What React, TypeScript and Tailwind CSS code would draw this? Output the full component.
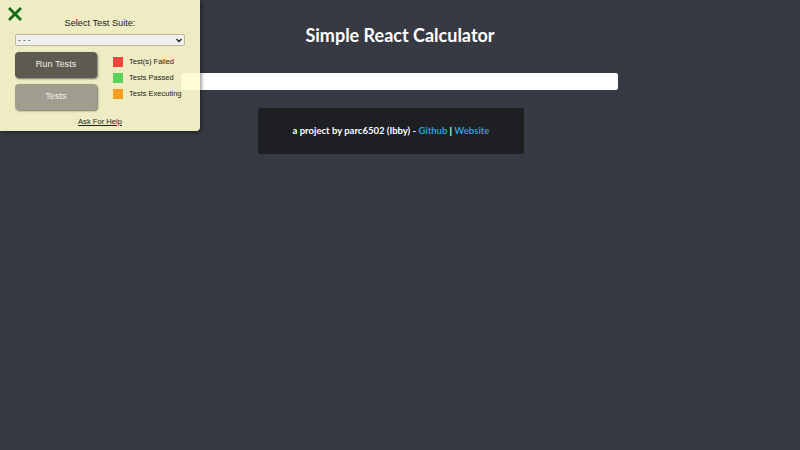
import { useState } from "react";

const lato = { fontFamily: "Lato, 'Noto Sans', sans-serif" };
const arial = { fontFamily: "'Liberation Sans', Arial, sans-serif" };

const TestPanel = () => {
  const [suite, setSuite] = useState("---");

  return (
    <div
      className="absolute left-0 top-0 w-[200px] h-[131px] rounded-br-[4px] bg-[rgba(253,252,206,0.92)] shadow-[1px_1px_4px_rgba(0,0,0,0.5)] text-[#222]"
      style={arial}
    >
      <svg className="absolute left-[8px] top-[7px]" width="14" height="14" viewBox="0 0 14 14">
        <path d="M2 2 L12 12 M12 2 L2 12" stroke="#176b17" strokeWidth="2.8" strokeLinecap="square" />
      </svg>
      <p className="pt-[16px] text-center text-[9.2px] leading-[14px]">Select Test Suite:</p>
      <div className="relative px-[15px] mt-[4px] h-[12px]">
        <select
          value={suite}
          onChange={(e) => setSuite(e.target.value)}
          className="block w-full h-[12px] text-[8px] leading-[10px] px-[2px] py-0 bg-[#f0f0ec] border border-[#b9b8a4] rounded-[2px] appearance-none"
          style={arial}
        >
          <option value="---">- - -</option>
        </select>
        <svg className="absolute right-[18px] top-[4px]" width="6" height="5" viewBox="0 0 6 5">
          <path d="M0.5 1 L3 3.5 L5.5 1" stroke="#222" strokeWidth="1.4" fill="none" />
        </svg>
      </div>
      <div className="flex px-[15px] mt-[6px]">
        <div className="flex flex-col gap-[6px]">
          <button className="w-[82px] h-[26px] rounded-[4px] bg-[#5d5b50] text-[#eeeee6] text-[9.2px] shadow-[1px_1px_2px_rgba(0,0,0,0.5)]">
            Run Tests
          </button>
          <button className="w-[82px] h-[26px] rounded-[4px] bg-[#a09e91] text-[#f0f0e8] text-[9.2px] shadow-[1px_1px_2px_rgba(0,0,0,0.5)]">
            Tests
          </button>
        </div>
        <div className="flex flex-col gap-[6px] ml-[16px] mt-[5px] text-[7.5px] leading-[10px] whitespace-nowrap">
          <div className="flex items-center gap-[6px]">
            <span className="w-[10px] h-[10px] bg-[#f1453d]" />
            <span>Test(s) Failed</span>
          </div>
          <div className="flex items-center gap-[6px]">
            <span className="w-[10px] h-[10px] bg-[#5cd35a]" />
            <span>Tests Passed</span>
          </div>
          <div className="flex items-center gap-[6px]">
            <span className="w-[10px] h-[10px] bg-[#f59d1c]" />
            <span>Tests Executing</span>
          </div>
        </div>
      </div>
      <p className="mt-[7px] text-center text-[7.6px] leading-[10px] underline">Ask For Help</p>
    </div>
  );
};

export default function App() {
  return (
    <div className="relative w-[800px] h-[450px] bg-[#373a42] overflow-hidden">
      <div className="flex flex-col" style={lato}>
        <h1 className="mt-[24px] text-center text-white font-bold text-[18px] leading-[22px]">
          Simple React Calculator
        </h1>
        <input
          readOnly
          className="mt-[27px] ml-[181px] w-[437px] h-[17px] bg-white rounded-[2px] outline-none"
        />
        <div className="mt-[18px] ml-[258px] w-[266px] h-[46px] bg-[#1e1f22] rounded-[2px] flex items-center justify-center text-[9.5px] font-bold text-white">
          <span>
            a project by parc6502 (Ibby) - <span className="text-[#2a9fd6]">Github</span> |{" "}
            <span className="text-[#2a9fd6]">Website</span>
          </span>
        </div>
      </div>
      <TestPanel />
    </div>
  );
}
